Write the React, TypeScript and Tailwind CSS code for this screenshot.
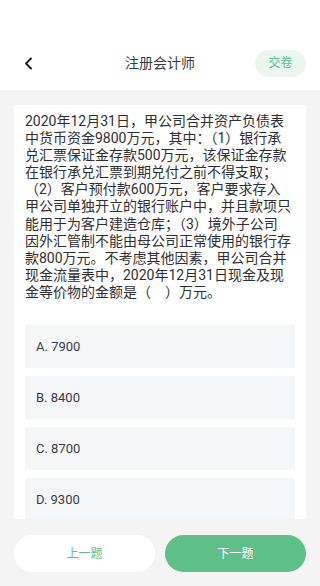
import React from 'react';

const questionLines = [
  '2020年12月31日，甲公司合并资产负债表',
  '中货币资金9800万元，其中：（1）银行承',
  '兑汇票保证金存款500万元，该保证金存款',
  '在银行承兑汇票到期兑付之前不得支取；',
  '（2）客户预付款600万元，客户要求存入',
  '甲公司单独开立的银行账户中，并且款项只',
  '能用于为客户建造仓库；（3）境外子公司',
  '因外汇管制不能由母公司正常使用的银行存',
  '款800万元。不考虑其他因素，甲公司合并',
  '现金流量表中，2020年12月31日现金及现',
  '金等价物的金额是（　）万元。',
];

const options = ['A. 7900', 'B. 8400', 'C. 8700', 'D. 9300'];

export default function App() {
  return (
    <div
      className="flex h-[586px] w-[320px] flex-col overflow-hidden bg-[#f4f4f5]"
      style={{ fontFamily: 'Roboto, "Noto Sans CJK SC", sans-serif' }}
    >
      <div className="h-[90px] shrink-0 bg-white pt-[36px]">
        <div className="flex h-[54px] items-center px-[14px]">
          <button className="flex h-[27px] w-[51px] items-center pl-[10px]">
            <svg width="9" height="13" viewBox="0 0 9 13" fill="none">
              <path d="M7 1.5L2 6.5L7 11.5" stroke="#1f1f1f" strokeWidth="2" strokeLinecap="round" strokeLinejoin="round" />
            </svg>
          </button>
          <div className="flex-1 text-center text-[14px] text-[#353a45]">注册会计师</div>
          <button className="flex h-[27px] w-[51px] items-center justify-center rounded-full bg-[#eaf6ef] text-[12px] text-[#62bd88]">
            交卷
          </button>
        </div>
      </div>

      <div className="flex min-h-0 flex-1 flex-col px-[14px] pt-[15px]">
        <div className="min-h-0 flex-1 overflow-hidden bg-white px-[11px] pt-[8px]">
          <div className="text-[14px] leading-[17.1px] text-[#2f2f33]">
            {questionLines.map((line, i) => (
              <div key={i} className="whitespace-nowrap">{line}</div>
            ))}
          </div>
          <div className="mt-[24px] flex flex-col gap-[8px]">
            {options.map((opt) => (
              <div key={opt} className="flex h-[43px] shrink-0 items-center bg-[#f5f6f8] px-[11px] text-[13px] text-[#3a3d44]">
                {opt}
              </div>
            ))}
          </div>
        </div>

        <div className="flex shrink-0 gap-[10px] pb-[14px] pt-[16px]">
          <button className="flex h-[37px] flex-1 items-center justify-center rounded-full bg-white text-[12px] text-[#5fbd87]">
            上一题
          </button>
          <button className="flex h-[37px] flex-1 items-center justify-center rounded-full bg-[#5ebf87] text-[12px] text-white">
            下一题
          </button>
        </div>
      </div>
    </div>
  );
}
